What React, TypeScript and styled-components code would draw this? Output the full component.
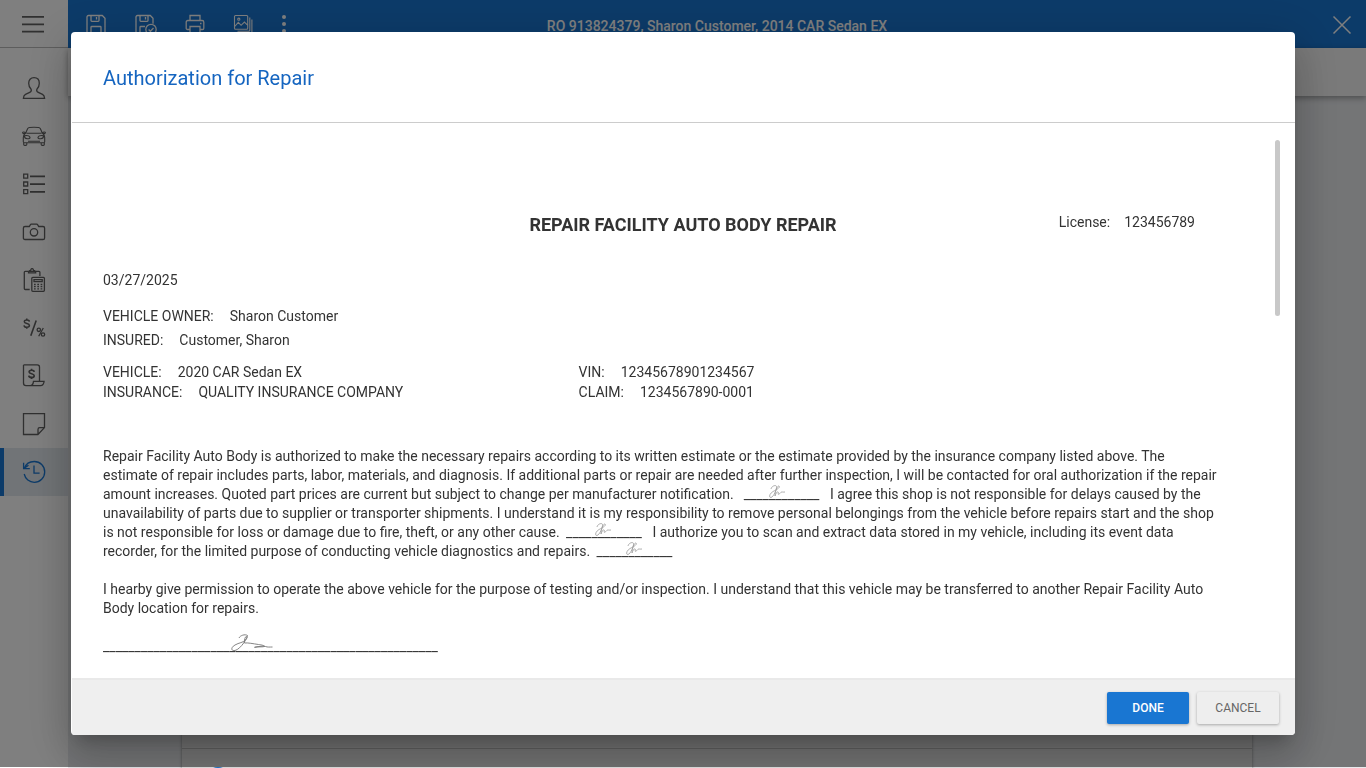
import React from 'react';
import styled, { createGlobalStyle, css } from 'styled-components';

const GlobalStyle = createGlobalStyle`
  *, *::before, *::after { box-sizing: border-box; }
  body { margin: 0; overflow: hidden; font: 14px/20px Roboto, "Liberation Sans", sans-serif; color: #333; background: #fff; }
  button { font: inherit; border: 0; padding: 0; background: none; cursor: pointer; }
  h1, h2, h3, p, dl, dt, dd { margin: 0; font: inherit; }
`;

const Shell = styled.div`
  display: flex;
  height: 100vh;
`;

const Sidebar = styled.nav`
  flex: none;
  width: 68px;
  background: #fff;
`;

const MenuButton = styled.button`
  display: flex;
  align-items: center;
  justify-content: center;
  width: 100%;
  height: 48px;
  margin-bottom: 16px;
  border-bottom: 1px solid #bbb;
  color: #606060;
`;

const NavLink = styled.a<{ $active?: boolean }>`
  display: flex;
  align-items: center;
  justify-content: center;
  height: 48px;
  color: #606060;
  ${(p) =>
    p.$active &&
    css`
      color: #1976d2;
      background: #e3e9ee;
      box-shadow: inset 4px 0 #1976d2;
    `}
`;

const Main = styled.div`
  flex: 1;
  min-width: 0;
  display: flex;
  flex-direction: column;
  background: #e8eaed;
`;

const TopBar = styled.header`
  flex: none;
  display: grid;
  grid-template-columns: 1fr auto 1fr;
  align-items: center;
  height: 48px;
  padding: 0 12px 0 16px;
  background: #1976d2;
  color: #fff;
`;

const Tools = styled.div`
  display: flex;
  gap: 25px;
`;

const IconButton = styled.button<{ $end?: boolean }>`
  display: flex;
  width: 24px;
  height: 24px;
  color: inherit;
  justify-self: ${(p) => (p.$end ? 'end' : 'start')};
`;

const OrderTitle = styled.h1`
  padding: 4px 4px 0 0;
  font-weight: 500;
`;

const SubBar = styled.div`
  flex: none;
  height: 48px;
  background: #f5f5f5;
  box-shadow: 0 2px 6px rgba(0, 0, 0, 0.35);
  z-index: 1;
`;

const Workspace = styled.div`
  flex: 1;
  min-height: 0;
  overflow: hidden;
  padding: 0 114px;
`;

const Card = styled.section`
  background: #e6e6e6;
  box-shadow: 0 0 3px rgba(0, 0, 0, 0.4);
`;

const CardPanel = styled.div`
  height: calc(100vh - 115px);
  border-bottom: 1px solid #bdbdbd;
`;

const CardRow = styled.div`
  padding: 18px 24px;
`;

const Marker = styled.div`
  width: 24px;
  height: 24px;
  border-radius: 50%;
  background: #1976d2;
`;

const Overlay = styled.div`
  position: fixed;
  inset: 0 0 1px;
  z-index: 2;
  display: flex;
  padding: 32px 71px;
  background: rgba(0, 0, 0, 0.5);
`;

const Dialog = styled.section`
  flex: 1;
  min-width: 0;
  display: flex;
  flex-direction: column;
  padding-left: 1px;
  overflow: hidden;
  border-radius: 4px;
  background: #fff;
  box-shadow: 0 11px 15px -7px rgba(0, 0, 0, 0.2), 0 24px 38px 3px rgba(0, 0, 0, 0.14),
    0 9px 46px 8px rgba(0, 0, 0, 0.12);
`;

const DialogHeader = styled.header`
  flex: none;
  height: 91px;
  padding: 32px 31px;
  border-bottom: 1px solid #ccc;
  color: #1565c0;
  font-size: 20px;
  line-height: 28px;
`;

const DialogBody = styled.div`
  flex: 1;
  min-height: 0;
  display: flex;
  padding: 17px 15px 0 31px;
`;

const Document = styled.article`
  flex: 1;
  min-width: 0;
  overflow: hidden;
`;

const ScrollThumb = styled.div`
  flex: none;
  width: 5px;
  height: 176px;
  border-radius: 3px;
  background: #c8c8c8;
`;

const Letterhead = styled.div`
  display: grid;
  grid-template-columns: 1fr auto 1fr;
  margin: 72px 12px 0 0;
`;

const FacilityName = styled.h3`
  grid-column: 2;
  font-size: 18px;
  line-height: 26px;
  font-weight: 700;
`;

const License = styled.dl`
  display: flex;
  justify-content: flex-end;
  gap: 14px;
  padding-right: 68px;
`;

const DateLine = styled.p`
  margin: 32px 0 14px;
`;

const Field = styled.div<{ $tall?: boolean }>`
  display: flex;
  gap: 16px;
  line-height: ${(p) => (p.$tall ? 24 : 20)}px;
`;

const Details = styled.dl`
  display: grid;
  grid-template-columns: 41fr 59fr;
  margin: 10px 12px 0 0;
`;

const Paragraph = styled.p`
  margin-top: 45px;
  padding-right: 54px;
  line-height: 19px;

  & + & {
    margin-top: 19px;
  }
`;

const InitialsLine = styled.span`
  position: relative;
  margin: 0 7px 0 3px;
  white-space: nowrap;
`;

const SignatureLine = styled.div`
  position: relative;
  margin-top: 19px;
  line-height: 19px;
`;

const Initials = styled.svg<{ $indent: number }>`
  position: absolute;
  left: ${(p) => p.$indent}px;
  top: -2px;
  overflow: visible;
`;

const Signature = styled.svg`
  position: absolute;
  left: 127px;
  top: -4px;
  overflow: visible;
`;

const DialogFooter = styled.footer`
  flex: none;
  display: flex;
  justify-content: flex-end;
  gap: 8px;
  height: 57px;
  padding: 12px 16px;
  border-top: 2px solid #e9e9e9;
  background: #efefef;
`;

const ActionButton = styled.button<{ $primary?: boolean }>`
  width: 82px;
  height: 32px;
  border-radius: 2px;
  font-size: 12px;
  line-height: 32px;
  font-weight: ${(p) => (p.$primary ? 500 : 400)};
  color: ${(p) => (p.$primary ? '#fff' : '#666')};
  background: ${(p) => (p.$primary ? '#1976d2' : '#eee')};
  box-shadow: 0 1px 3px rgba(0, 0, 0, 0.3);
`;

const Icon = ({ children, w = 1.3, shift = 0 }: { children: React.ReactNode; w?: number; shift?: number }) => (
  <svg
    width="24"
    height="24"
    viewBox={`${shift} 0 24 24`}
    fill="none"
    stroke="currentColor"
    strokeWidth={w}
    aria-hidden="true"
  >
    {children}
  </svg>
);

const dollar = 'M3.2-2.2C3-3.6 2-4.2.2-4.2-1.6-4.2-2.8-3.500-2.800-2.200-2.800.6 3.200-.6 3.200 2.300 3.200 3.700 1.800 4.300.2 4.300-1.800 4.300-3 3.600-3.200 2.100M.1-6v1.800M.1 4.300v1.800';

const navItems = [
  {
    label: 'Customer',
    icon: (
      <Icon>
        <path d="M12 1.600c-3.400 0-5.300 2.400-5.300 5.600 0 2.700 1 4.700 2.400 6 .6 1.600.1 2.500-1.400 3.200l-4.200 2c-1.400.7-2 1.900-2.100 4h21.200c-.1-2.100-.7-3.300-2.100-4l-4.200-2c-1.500-.7-2-1.600-1.400-3.200 1.400-1.300 2.400-3.300 2.400-6 0-3.200-1.900-5.600-5.300-5.600z" />
      </Icon>
    ),
  },
  {
    label: 'Vehicle',
    icon: (
      <Icon w={1.1}>
        <path d="M3.500 9.500 5.600 4.800C6 3.900 6.600 3.600 7.500 3.500c3-.4 6-.4 9 0 .9.100 1.500.4 1.900 1.300l2.100 4.700M4.500 9.300h15M3.500 9.300C1.800 10.400 1.300 11.500 1.300 13.500v4.300c0 .6.300.9.900.9h19.600c.6 0 .9-.3.900-.9v-4.300c0-2-.5-3.100-2.200-4.200M3.500 9C2.600 7.600.5 7.700.6 8.800c0 .8 1.200.9 2.200.8M20.500 9c.9-1.400 3-1.300 2.900-.2 0 .8-1.200.9-2.200.8M1.700 18.700v1.800c0 .6.3.9.900.9h1.300c.6 0 .9-.3.900-.9v-1.800M19.200 18.700v1.800c0 .6.3.9.900.9h1.300c.6 0 .9-.3.900-.9v-1.800M2.400 11.700c2.500-.4 5 .2 5.600 1.600.1 1.100-1.100 1.600-2.600 1.500-1.900-.1-3-1.500-3-3.100zM21.600 11.700c-2.500-.4-5 .2-5.600 1.600-.1 1.100 1.100 1.600 2.600 1.500 1.900-.1 3-1.500 3-3.100zM6 17.200h12" />
      </Icon>
    ),
  },
  {
    label: 'Line items',
    icon: (
      <Icon>
        <path d="M1.700 2.200h4v4h-4zM1.700 10h4v4h-4zM1.700 17.700h4v4h-4z" />
        <path d="M8 4.400h15M8 12.200h15M8 19.900h15" strokeWidth="1.700" />
      </Icon>
    ),
  },
  {
    label: 'Photos',
    icon: (
      <Icon>
        <path d="M3 6.500h4.300L8.400 4.600c.2-.4.500-.5.900-.5h5.400c.4 0 .7.1.9.5l1.100 1.900H21c1 0 1.600.6 1.600 1.600v9.800c0 1-.6 1.600-1.600 1.600H3c-1 0-1.600-.6-1.600-1.600V8.100c0-1 .6-1.600 1.600-1.600z" />
        <circle cx="12" cy="12.300" r="3.700" />
      </Icon>
    ),
  },
  {
    label: 'Estimate',
    icon: (
      <Icon>
        <path d="M7.700 21.500H3.200c-.6 0-.9-.3-.9-.9V4.300c0-.6.3-.9.900-.9H17c.6 0 .9.3.9.900V8M6.500 4.800c0-2 .9-2.400 2.200-2.500.1-1.200.6-1.700 1.400-1.700s1.300.5 1.400 1.700c1.300.1 2.200.5 2.200 2.500z" />
        <rect x="9.800" y="9.300" width="12.600" height="14" rx="1" />
        <path d="M12 11.600h8.200v2H12z" />
        <path d="M12 16.500h1.700M15.300 16.500H17M18.600 16.500h1.700M12 18.700h1.700M15.300 18.700H17M18.600 18.700h1.700M12 20.900h1.700M15.300 20.900H17M18.600 20.900h1.700" />
      </Icon>
    ),
  },
  {
    label: 'Rates',
    icon: (
      <Icon>
        <path transform="translate(4.700 7.500) scale(.85)" d={dollar} strokeWidth="1.800" />
        <path d="M14.200 4.500 8.800 19.800" strokeWidth="1.600" />
        <circle cx="16.800" cy="13.800" r="1.700" />
        <circle cx="21" cy="18.500" r="1.700" />
        <path d="m21.300 12-4.600 8.200" />
      </Icon>
    ),
  },
  {
    label: 'Invoice',
    icon: (
      <Icon>
        <path d="M1.500 .9h13.800c1.300 0 2.200.9 2.200 2.200V17M1.500 .9v18.200c0 1.700.9 2.600 2.500 2.600h14.500c2 0 3.300-1.400 3.600-4.400H11.500c-.3 2.400-1 4.400-3.300 4.400" />
        <path transform="translate(9.500 9.800) scale(.85)" d={dollar} strokeWidth="2" />
      </Icon>
    ),
  },
  {
    label: 'Notes',
    icon: (
      <Icon>
        <path d="M1.500 1.600h21v14l-6.600 6.900H1.500zM22.500 15.700h-4.800c-1 0-1.700.7-1.700 1.700v5.100" />
      </Icon>
    ),
  },
  {
    label: 'History',
    icon: (
      <Icon>
        <path d="M2.400 8.400C3.800 4.200 7.700 1.500 12.300 1.500c5.900 0 10.400 4.700 10.400 10.400s-4.600 10.400-10.400 10.400c-4.900 0-9-3.300-10.100-8.300M1.600 2.700v6h6.200M1.900 8.500l4.600-3.200M12 5.500v7.700h5.600" />
      </Icon>
    ),
  },
];

const SaveIcon = () => (
  <Icon shift={1}>
    <path d="M5.500 3.500h13.800l2.700 2.700v15.300H5.500c-.9 0-1.500-.6-1.500-1.500V5c0-.9.600-1.500 1.500-1.500zM8 3.500v5c0 .5.300.8.800.8h6.400c.5 0 .8-.3.800-.8v-5M13.500 5v2.500M8 21.500v-6.200c0-.5.300-.8.800-.8h8.400c.5 0 .8.300.8.800v6.200" />
  </Icon>
);

const SaveCheckIcon = () => (
  <Icon>
    <path d="M11 21.500H4.500c-.9 0-1.500-.6-1.500-1.500V5c0-.9.600-1.500 1.500-1.500h12.800L20 6.200v5.500M7 3.500v5c0 .5.300.8.800.8h6.400c.5 0 .8-.3.800-.8v-5M12.500 5v2.500M7 21.500v-6.200c0-.5.300-.8.800-.8H12" />
    <circle cx="18" cy="17.500" r="5.200" />
    <path d="m15.600 17.500 1.800 1.800 3.100-3.300" />
  </Icon>
);

const PrintIcon = () => (
  <Icon w={1.3} shift={-1}>
    <path d="M7 8.500v-5h10v5M7 17.500H4.500c-.8 0-1.300-.5-1.300-1.300v-6c0-1.100.6-1.700 1.700-1.700h14.200c1.100 0 1.700.6 1.700 1.700v6c0 .8-.5 1.300-1.300 1.300H17M7 14.500h10v7H7zM17 11.500h1.500" />
  </Icon>
);

const ImagesIcon = () => (
  <Icon w={1.1} shift={-1}>
    <path d="M3.500 3.500h11.200c.6 0 1 .4 1 1v11.700c0 .6-.4 1-1 1H3.500c-.6 0-1-.4-1-1V4.500c0-.6.400-1 1-1zM2.700 14.500l3.600-4.200 2.800 3 3.300-3.300 3.200 3.200M17.800 5.500v12.800c0 .6-.4 1-1 1H5.500M19.900 7.500v12.900c0 .6-.4 1-1 1H7.500" />
    <circle cx="6.800" cy="7.200" r="1.100" />
  </Icon>
);

const InlineSign = ({ indent }: { indent: number }) => (
  <InitialsLine>
    ____________
    <Initials
      $indent={indent}
      width="18"
      height="16"
      viewBox="0 0 18 16"
      fill="none"
      stroke="#999"
      strokeWidth="0.8"
      aria-hidden="true"
    >
      <path d="M3 5C3.500 2 8 .5 8.500 2.500 9 5 5.500 13 3 13.500.5 13.700 1.500 9.500 5 7.500 9 5.500 12.500 3.500 11 2 9 1.500 7 8 7 12c1-3 2.500-5 3.200-4 .5.700-.6 2.800.5 2.300 1.500-.6 2-2.300 3-2.300s1.500.2 3.300 0" />
    </Initials>
  </InitialsLine>
);

export default function App() {
  return (
    <>
      <GlobalStyle />
      <Shell>
        <Sidebar aria-label="Repair order">
          <MenuButton aria-label="Menu">
            <Icon w={1.8} shift={1}>
              <path d="M1 4.800h22M1 12.300h22M1 19.600h22" />
            </Icon>
          </MenuButton>
          {navItems.map((item) => (
            <NavLink key={item.label} href="#" aria-label={item.label} $active={item.label === 'History'}>
              {item.icon}
            </NavLink>
          ))}
        </Sidebar>
        <Main>
          <TopBar>
            <Tools>
              <IconButton aria-label="Save"><SaveIcon /></IconButton>
              <IconButton aria-label="Save and close"><SaveCheckIcon /></IconButton>
              <IconButton aria-label="Print"><PrintIcon /></IconButton>
              <IconButton aria-label="Images"><ImagesIcon /></IconButton>
              <IconButton aria-label="More">
                <svg width="12" height="24" viewBox="0 0 12 24" fill="currentColor" aria-hidden="true">
                  <circle cx="4" cy="5" r="2" />
                  <circle cx="4" cy="12" r="2" />
                  <circle cx="4" cy="19" r="2" />
                </svg>
              </IconButton>
            </Tools>
            <OrderTitle>RO 913824379, Sharon Customer, 2014 CAR Sedan EX</OrderTitle>
            <IconButton $end aria-label="Close">
              <Icon w={1.500}>
                <path d="m3.500 4.500 17 17M20.500 4.500l-17 17" />
              </Icon>
            </IconButton>
          </TopBar>
          <SubBar />
          <Workspace>
            <Card>
              <CardPanel />
              <CardRow><Marker /></CardRow>
            </Card>
          </Workspace>
        </Main>
      </Shell>
      <Overlay>
        <Dialog role="dialog" aria-modal="true" aria-labelledby="dialog-title">
          <DialogHeader>
            <h2 id="dialog-title">Authorization for Repair</h2>
          </DialogHeader>
          <DialogBody>
            <Document>
              <Letterhead>
                <FacilityName>REPAIR FACILITY AUTO BODY REPAIR</FacilityName>
                <License>
                  <dt>License:</dt>
                  <dd>123456789</dd>
                </License>
              </Letterhead>
              <DateLine>03/27/2025</DateLine>
              <dl>
                <Field $tall><dt>VEHICLE OWNER:</dt><dd>Sharon Customer</dd></Field>
                <Field $tall><dt>INSURED:</dt><dd>Customer, Sharon</dd></Field>
              </dl>
              <Details>
                <Field><dt>VEHICLE:</dt><dd>2020 CAR Sedan EX</dd></Field>
                <Field><dt>VIN:</dt><dd>12345678901234567</dd></Field>
                <Field><dt>INSURANCE:</dt><dd>QUALITY INSURANCE COMPANY</dd></Field>
                <Field><dt>CLAIM:</dt><dd>1234567890-0001</dd></Field>
              </Details>
              <Paragraph>
                Repair Facility Auto Body is authorized to make the necessary repairs according to its written estimate
                or the estimate provided by the insurance company listed above. The estimate of repair includes parts,
                labor, materials, and diagnosis. If additional parts or repair are needed after further inspection, I
                will be contacted for oral authorization if the repair amount increases. Quoted part prices are current
                but subject to change per manufacturer notification. &nbsp;<InlineSign indent={24} /> I agree this shop
                is not responsible for delays caused by the unavailability of parts due to supplier or transporter
                shipments. I understand it is my responsibility to remove personal belongings from the vehicle before
                repairs start and the shop is not responsible for loss or damage due to fire, theft, or any other
                cause. <InlineSign indent={28} /> I authorize you to scan and extract data stored in my vehicle,
                including its event data recorder, for the limited purpose of conducting vehicle diagnostics and
                repairs. <InlineSign indent={28} />
              </Paragraph>
              <Paragraph>
                I hearby give permission to operate the above vehicle for the purpose of testing and/or inspection. I
                understand that this vehicle may be transferred to another Repair Facility Auto Body location for
                repairs.
              </Paragraph>
              <SignatureLine>
                {'_'.repeat(53)}
                <Signature width="44" height="20" viewBox="0 0 44 20" fill="none" stroke="#777" strokeWidth="0.900" aria-hidden="true">
                  <path d="M9 5C10 2.500 15 .8 17.500 2.500 18 4 11 16 5 17.500 1 18.300.5 14.500 5 12 9 9.500 13 10 16 6.500 18 4 16.500 2.500 15.500 4 14.500 6 14 9 14.500 10c3-.5 9 .8 14 1.500 4 .5 7 1.500 6 2-2 .7-7 0-10 .8 5-1 9-1.500 11-.8 2 .8 4 .5 7 .5" />
                </Signature>
              </SignatureLine>
            </Document>
            <ScrollThumb />
          </DialogBody>
          <DialogFooter>
            <ActionButton $primary>DONE</ActionButton>
            <ActionButton>CANCEL</ActionButton>
          </DialogFooter>
        </Dialog>
      </Overlay>
    </>
  );
}
